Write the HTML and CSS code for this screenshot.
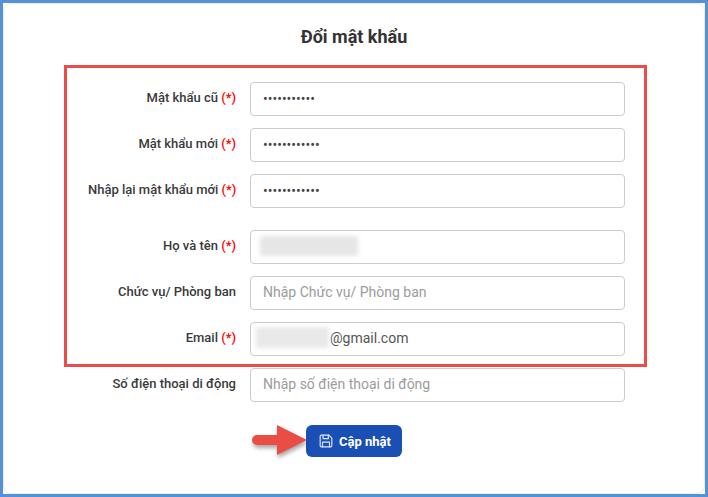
FILE: index.html
```html
<!DOCTYPE html>
<html lang="vi">
<head>
<meta charset="utf-8">
<title>Đổi mật khẩu</title>
<link rel="stylesheet" href="styles.css">
</head>
<body>
<main class="frame">
  <section class="card">
    <h1 class="title">Đổi mật khẩu</h1>
    <form class="form">
      <div class="group">
        <div class="row"><label class="label">Mật khẩu cũ <span class="req">(*)</span></label><input class="input secret" type="password" value="abcdefghijk"></div>
        <div class="row"><label class="label">Mật khẩu mới <span class="req">(*)</span></label><input class="input secret" type="password" value="abcdefghijkl"></div>
        <div class="row"><label class="label">Nhập lại mật khẩu mới <span class="req">(*)</span></label><input class="input secret" type="password" value="abcdefghijkl"></div>
      </div>
      <div class="group">
        <div class="row"><label class="label">Họ và tên <span class="req">(*)</span></label><div class="field"><input class="input" type="text"><span class="blur blur-name"></span></div></div>
        <div class="row"><label class="label">Chức vụ/ Phòng ban</label><input class="input" type="text" placeholder="Nhập Chức vụ/ Phòng ban"></div>
        <div class="row"><label class="label">Email <span class="req">(*)</span></label><div class="field"><input class="input email" type="text" value="@gmail.com"><span class="blur blur-email"></span></div></div>
        <div class="row"><label class="label">Số điện thoại di động</label><input class="input" type="text" placeholder="Nhập số điện thoại di động"></div>
      </div>
      <div class="actions">
        <button class="save" type="button">
          <svg class="save-icon" viewBox="0 0 24 24" width="14" height="14" fill="none" stroke="currentColor" stroke-width="2" stroke-linejoin="round" stroke-linecap="round"><path d="M4 2h13l5 5v13a2 2 0 0 1-2 2H4a2 2 0 0 1-2-2V4a2 2 0 0 1 2-2z"/><path d="M7 2v6h9V2"/><path d="M6 22v-8h12v8"/></svg>
          <span>Cập nhật</span>
        </button>
        <svg class="arrow" viewBox="0 0 56 36" width="56" height="36"><path d="M5 11H25V1L55 16 25 31V21H5a5 5 0 0 1 0-10z" fill="#ea4d45"/></svg>
      </div>
    </form>
    <div class="highlight"></div>
  </section>
</main>
</body>
</html>
```

FILE: styles.css
```css
* { box-sizing: border-box; }
html, body { margin: 0; height: 100%; }
body { font-family: Roboto, "Liberation Sans", sans-serif; background: #fff; }
.frame {
  width: 708px;
  height: 497px;
  border: 3px solid #5491d9;
  background: #fff;
}
.card {
  position: relative;
  height: 100%;
  border: 1px solid #ececec;
  border-radius: 8px;
  padding-top: 21px;
}
.title {
  margin: 0;
  text-align: center;
  font-size: 18px;
  line-height: 24px;
  font-weight: 700;
  color: #333;
}
.form {
  margin-top: 33px;
  padding-left: 84px;
  display: flex;
  flex-direction: column;
}
.group {
  display: flex;
  flex-direction: column;
  gap: 12px;
  margin-bottom: 22px;
}
.group + .group { margin-bottom: 0; }
.row {
  display: flex;
  gap: 14px;
}
.label {
  width: 148px;
  padding-top: 8px;
  text-align: right;
  font-size: 13px;
  line-height: 16px;
  font-weight: 500;
  color: #3a3a3a;
  white-space: nowrap;
}
.req { color: #f00; }
.input {
  display: block;
  width: 375px;
  height: 34px;
  padding: 0 12px 2px;
  border: 1px solid #ccc;
  border-radius: 4px;
  background: #fff;
  font-family: Roboto, "Liberation Sans", sans-serif;
  font-size: 14px;
  color: #555;
  outline: none;
}
.input::placeholder { color: #9c9c9c; opacity: 1; }
.secret { color: #444; padding-bottom: 0; }
.email { padding-left: 79px; }
.field { position: relative; }
.blur {
  position: absolute;
  background: #e6e6e6;
  filter: blur(2px);
}
.blur-name { left: 10px; top: 6px; width: 98px; height: 20px; }
.blur-email { left: 6px; top: 5px; width: 73px; height: 21px; background: #e9e9e9; }
.actions {
  position: relative;
  align-self: flex-start;
  margin: 23px 0 0 218px;
}
.save {
  display: flex;
  align-items: center;
  gap: 6px;
  width: 96px;
  height: 32px;
  padding: 0 0 0 13px;
  border: 0;
  border-radius: 6px;
  background: #1a4fb5;
  color: #fff;
  font-family: Roboto, "Liberation Sans", sans-serif;
  font-size: 13px;
  font-weight: 700;
}
.save-icon { color: #dbe6f8; flex: none; }
.arrow {
  position: absolute;
  left: -54px;
  top: -1px;
  filter: drop-shadow(1px 3px 2px rgba(0, 0, 0, .35));
}
.highlight {
  position: absolute;
  left: 60px;
  top: 61px;
  width: 583px;
  height: 302px;
  border: 3px solid #ea4d49;
  pointer-events: none;
}
```
